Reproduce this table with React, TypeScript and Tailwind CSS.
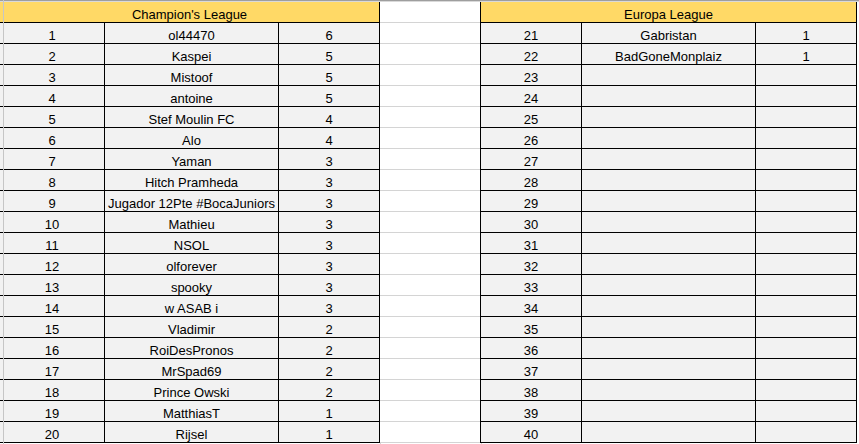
import React from "react"

interface Row {
    rank: number,
    name: string,
    pts: string
}

const champions: Row[] = [
    { rank: 1, name: "ol44470", pts: "6" },
    { rank: 2, name: "Kaspei", pts: "5" },
    { rank: 3, name: "Mistoof", pts: "5" },
    { rank: 4, name: "antoine", pts: "5" },
    { rank: 5, name: "Stef Moulin FC", pts: "4" },
    { rank: 6, name: "Alo", pts: "4" },
    { rank: 7, name: "Yaman", pts: "3" },
    { rank: 8, name: "Hitch Pramheda", pts: "3" },
    { rank: 9, name: "Jugador 12Pte #BocaJuniors", pts: "3" },
    { rank: 10, name: "Mathieu", pts: "3" },
    { rank: 11, name: "NSOL", pts: "3" },
    { rank: 12, name: "olforever", pts: "3" },
    { rank: 13, name: "spooky", pts: "3" },
    { rank: 14, name: "w ASAB i", pts: "3" },
    { rank: 15, name: "Vladimir", pts: "2" },
    { rank: 16, name: "RoiDesPronos", pts: "2" },
    { rank: 17, name: "MrSpad69", pts: "2" },
    { rank: 18, name: "Prince Owski", pts: "2" },
    { rank: 19, name: "MatthiasT", pts: "1" },
    { rank: 20, name: "Rijsel", pts: "1" },
]

const europa: Row[] = Array.from({ length: 20 }, (_, i) => {
    const rank = 21 + i
    if (rank === 21) return { rank, name: "Gabristan", pts: "1" }
    if (rank === 22) return { rank, name: "BadGoneMonplaiz", pts: "1" }
    return { rank, name: "", pts: "" }
})

// excel-ish cell: bottom aligned text, centered
const cell = "h-[21px] border-b border-r border-black flex items-end justify-center pb-[0px] leading-[14px] whitespace-nowrap overflow-hidden"

const LeagueTable = ({ title, rows, bordered }: { title: string, rows: Row[], bordered?: boolean }) => {
    return (
        <div className={`flex flex-col ${bordered ? "w-[377px] border-l border-black" : "w-[380px]"}`}>
            <div className="h-[21px] bg-[#ffd966] border-b border-r border-black flex items-end justify-center leading-[14px]">
                {title}
            </div>
            {rows.map((r) => (
                <div key={r.rank} className="flex bg-[#f2f2f2]">
                    <div className={`${cell} ${bordered ? "w-[101px]" : "w-[105px]"}`}>{r.rank}</div>
                    <div className={`${cell} w-[174px]`}>{r.name}</div>
                    <div className={`${cell} w-[101px]`}>{r.pts}</div>
                </div>
            ))}
        </div>
    )
}

const App: React.FC = () => {
    return (
        <div className="relative w-[859px] h-[444px] bg-white overflow-hidden text-black text-[13px]" style={{ fontFamily: '"Liberation Sans", Arial, sans-serif' }}>
            <div className="h-px bg-[#9e9e9e]"></div>
            <div className="h-px bg-[#d9d9d9]"></div>
            <div className="flex">
                <LeagueTable title="Champion's League" rows={champions} />
                <div className="w-[100px] flex flex-col">
                    {Array.from({ length: 21 }, (_, i) => (
                        <div key={i} className="h-[21px] border-b border-[#d4d4d4]"></div>
                    ))}
                </div>
                <LeagueTable title="Europa League" rows={europa} bordered />
            </div>
            <div className="flex h-px">
                <div className="w-[380px]"></div>
                <div className="w-px bg-[#d4d4d4]"></div>
                <div className="w-[100px]"></div>
                <div className="w-px bg-[#d4d4d4]"></div>
            </div>
            <div className="absolute left-[3px] top-0 w-px h-full bg-[#c6c6c6]"></div>
        </div>
    )
}

export default App
